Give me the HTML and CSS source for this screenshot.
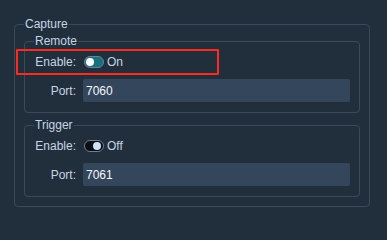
FILE: index.html
```html
<!DOCTYPE html>
<html>
<head>
<meta charset="utf-8">
<link rel="stylesheet" href="styles.css">
</head>
<body>
<fieldset class="group">
  <legend class="group-title">Capture</legend>
  <fieldset class="sub">
    <legend class="group-title">Remote</legend>
    <div class="form">
      <span class="label">Enable:</span>
      <div class="toggle-wrap">
        <span class="switch on"><span class="knob"></span></span>
        <span class="state">On</span>
      </div>
      <span class="label">Port:</span>
      <input class="field" type="text" value="7060">
    </div>
  </fieldset>
  <fieldset class="sub sub-second">
    <legend class="group-title">Trigger</legend>
    <div class="form">
      <span class="label">Enable:</span>
      <div class="toggle-wrap">
        <span class="switch off"><span class="knob"></span></span>
        <span class="state">Off</span>
      </div>
      <span class="label">Port:</span>
      <input class="field" type="text" value="7061">
    </div>
  </fieldset>
</fieldset>
<div class="highlight"></div>
</body>
</html>
```
FILE: styles.css
```css
html, body {
  margin: 0;
  padding: 0;
  background: #212f3d;
}
body {
  box-sizing: border-box;
  width: 387px;
  height: 222px;
  padding: 17px 17px 14px 14px;
  font-family: "Liberation Sans", Arial, sans-serif;
  font-size: 12px;
  color: #c6d4e3;
  position: relative;
  overflow: hidden;
}
.group {
  margin: 0;
  padding: 3px 9px 9px 9px;
  border: 1px solid #3a4a5b;
  border-radius: 4px;
  min-width: 0;
}
.group-title {
  padding: 0 1px;
  line-height: 14px;
  font-size: 12px;
  color: #c6d4e3;
}
.sub {
  margin: 0;
  padding: 6px 9px 10px 9px;
  border: 1px solid #3a4a5b;
  border-radius: 4px;
  min-width: 0;
}
.sub-second {
  margin-top: 5px;
}
.form {
  display: grid;
  grid-template-columns: 42px 1fr;
  grid-template-rows: 16px 23px;
  column-gap: 7px;
  row-gap: 9px;
  align-items: center;
}
.label {
  justify-self: end;
  line-height: 14px;
  white-space: nowrap;
}
.toggle-wrap {
  display: flex;
  align-items: center;
  margin-left: 1px;
}
.switch {
  box-sizing: border-box;
  width: 20px;
  height: 12px;
  border: 1px solid #6f7f8f;
  border-radius: 6px;
  display: flex;
  align-items: center;
  padding: 0 1px;
}
.switch.on {
  background: #16717f;
  justify-content: flex-start;
}
.switch.off {
  background: #0a0e13;
  justify-content: flex-end;
  padding-right: 2px;
}
.knob {
  width: 8px;
  height: 8px;
  border-radius: 50%;
}
.switch.on .knob {
  background: #ffffff;
}
.switch.off .knob {
  background: #cfe2fa;
}
.state {
  margin-left: 3px;
  line-height: 14px;
}
.field {
  box-sizing: border-box;
  width: 100%;
  height: 23px;
  margin: 0;
  padding: 0 3px;
  border: none;
  border-radius: 2px;
  background: #34465b;
  color: #f4f8fc;
  font-family: "Liberation Sans", Arial, sans-serif;
  font-size: 12px;
  outline: none;
}
.highlight {
  position: absolute;
  left: 16px;
  top: 49px;
  width: 203px;
  height: 26px;
  box-sizing: border-box;
  border: 2px solid #ff2a1f;
  border-radius: 1px;
}
```
